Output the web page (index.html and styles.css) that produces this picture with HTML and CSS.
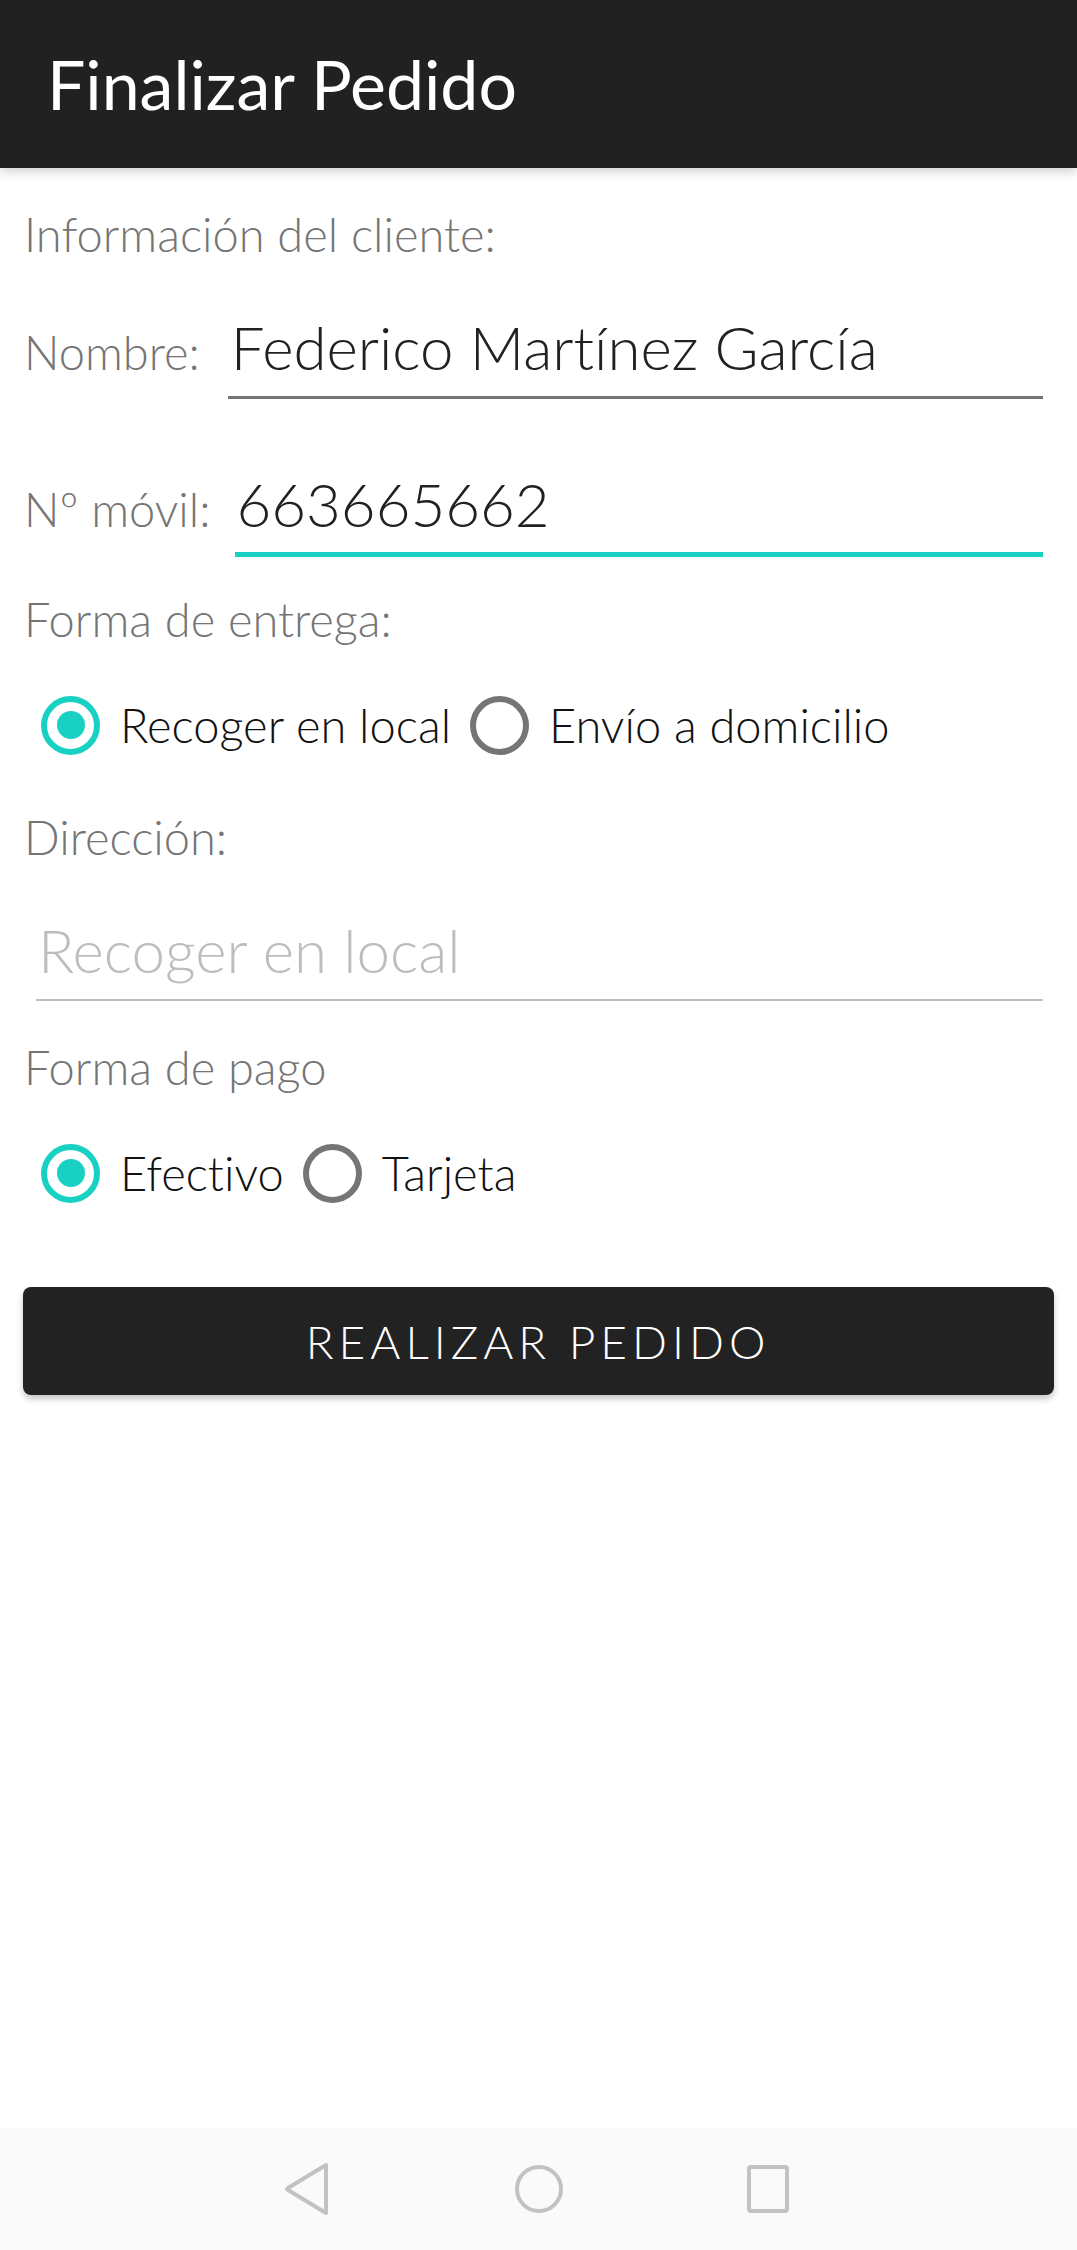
FILE: index.html
```html
<!DOCTYPE html>
<html lang="es">
<head>
<meta charset="utf-8">
<title>Finalizar Pedido</title>
<link rel="stylesheet" href="styles.css">
</head>
<body>
<header class="appbar">
  <h1 class="appbar-title">Finalizar Pedido</h1>
</header>
<main class="form">
  <p class="label section">Información del cliente:</p>

  <div class="field-row row-name">
    <span class="label">Nombre:</span>
    <div class="input">Federico Martínez García</div>
  </div>

  <div class="field-row row-phone">
    <span class="label">Nº móvil:</span>
    <div class="input focused">663665662</div>
  </div>

  <p class="label section delivery">Forma de entrega:</p>
  <div class="radio-group">
    <label class="radio-option"><span class="radio checked"></span><span class="radio-text">Recoger en local</span></label>
    <label class="radio-option"><span class="radio"></span><span class="radio-text">Envío a domicilio</span></label>
  </div>

  <p class="label section address">Dirección:</p>
  <div class="input hint">Recoger en local</div>

  <p class="label section payment">Forma de pago</p>
  <div class="radio-group">
    <label class="radio-option"><span class="radio checked"></span><span class="radio-text">Efectivo</span></label>
    <label class="radio-option"><span class="radio"></span><span class="radio-text">Tarjeta</span></label>
  </div>

  <button class="submit" type="button">REALIZAR PEDIDO</button>
</main>
<nav class="navbar">
  <svg class="nav-icon back" width="46" height="54" viewBox="0 0 46 54"><path d="M42 3 L4 26 Q2 27 4 28 L42 51 Z" fill="none" stroke="#c2c2c2" stroke-width="4" stroke-linejoin="round"/></svg>
  <svg class="nav-icon home" width="52" height="52" viewBox="0 0 52 52"><circle cx="26" cy="26" r="22" fill="none" stroke="#c2c2c2" stroke-width="4"/></svg>
  <svg class="nav-icon recent" width="44" height="50" viewBox="0 0 44 50"><rect x="3" y="3" width="38" height="44" rx="2" fill="none" stroke="#c2c2c2" stroke-width="4"/></svg>
</nav>
</body>
</html>
```

FILE: styles.css
```css
* { box-sizing: border-box; }

html, body {
  margin: 0;
  padding: 0;
  background: #ffffff;
}

body {
  width: 1077px;
  min-height: 2250px;
  display: flex;
  flex-direction: column;
  font-family: "Lato", "Liberation Sans", sans-serif;
  font-weight: 300;
  font-variant-ligatures: none;
}

.appbar {
  height: 168px;
  background: #212121;
  display: flex;
  align-items: center;
  padding-left: 47px;
  box-shadow: 0 4px 10px rgba(0, 0, 0, 0.18);
  position: relative;
  z-index: 1;
}

.appbar-title {
  margin: 0;
  color: #ffffff;
  font-size: 68px;
  font-weight: 400;
  line-height: 80px;
}

.form {
  flex: 1;
  padding: 0 24px 0 24px;
  display: flex;
  flex-direction: column;
}

.label {
  margin: 0;
  color: #757575;
  font-size: 47px;
  line-height: 60px;
  white-space: nowrap;
}

.section { margin-top: 36px; }
.delivery { margin-top: 32px; }
.address { margin-top: 42px; }
.payment { margin-top: 36px; }

.field-row {
  display: flex;
  align-items: baseline;
  gap: 28px;
}

.row-name { margin-top: 43px; }
.row-phone { margin-top: 65px; gap: 25px; }

.input {
  flex: 1;
  font-size: 60px;
  line-height: 80px;
  color: #212121;
  padding-bottom: 9px;
  border-bottom: 3px solid #757575;
  padding-left: 3px;
  margin-right: 10px;
  white-space: nowrap;
}

.input.focused {
  border-bottom: 5px solid #19d1c2;
  padding-bottom: 8px;
  padding-left: 1px;
}

.input.hint {
  flex: none;
  color: #bdbdbd;
  border-bottom: 2px solid #bdbdbd;
  margin-left: 12px;
  margin-top: 43px;
  padding-left: 2px;
}

.radio-group {
  display: flex;
  align-items: center;
  gap: 19px;
  height: 80px;
  margin-top: 36px;
  padding-left: 17px;
}

.radio-option {
  display: flex;
  align-items: center;
  gap: 20px;
}

.radio {
  width: 59px;
  height: 59px;
  border-radius: 50%;
  border: 6px solid #757575;
  display: flex;
  align-items: center;
  justify-content: center;
}

.radio.checked { border-color: #19d1c2; }

.radio.checked::after {
  content: "";
  width: 28px;
  height: 28px;
  border-radius: 50%;
  background: #19d1c2;
}

.radio-text {
  font-size: 47px;
  line-height: 80px;
  color: #111111;
  white-space: nowrap;
}

.submit {
  margin-top: 74px;
  height: 108px;
  margin-right: -1px;
  margin-left: -1px;
  border: none;
  border-radius: 8px;
  background: #222222;
  color: #ffffff;
  font-family: "Lato", "Liberation Sans", sans-serif;
  font-weight: 300;
  font-size: 46px;
  letter-spacing: 5px;
  padding-left: 5px;
  box-shadow: 0 4px 6px rgba(0, 0, 0, 0.22);
}

.navbar {
  height: 122px;
  background: #fafafa;
  display: flex;
  align-items: center;
  padding-left: 284px;
}

.nav-icon { display: block; }
.nav-icon.back { margin-right: 183px; }
.nav-icon.home { margin-right: 181px; }
```
